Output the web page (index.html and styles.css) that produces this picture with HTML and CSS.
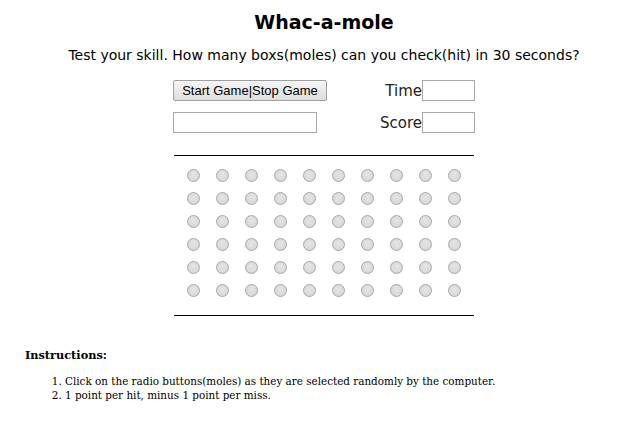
FILE: index.html
```html
<!DOCTYPE html>
<html>
<head>
<meta charset="utf-8">
<title>Whac-a-mole</title>
<link rel="stylesheet" href="styles.css">
</head>
<body>
<div class="game">
  <h1 class="title">Whac-a-mole</h1>
  <p class="lead">Test your skill. How many boxs(moles) can you check(hit) in 30 seconds?</p>
  <div class="controls">
    <button class="btn" type="button">Start Game|Stop Game</button>
    <div class="field"><span class="label">Time</span><input class="small" type="text"></div>
    <input class="wide" type="text">
    <div class="field"><span class="label">Score</span><input class="small" type="text"></div>
  </div>
  <div class="board">
    <div class="grid" id="grid"></div>
  </div>
</div>
<div class="instructions">
  <h3 class="ins-title">Instructions:</h3>
  <ol class="ins-list">
    <li>Click on the radio buttons(moles) as they are selected randomly by the computer.</li>
    <li>1 point per hit, minus 1 point per miss.</li>
  </ol>
</div>
<script>
  var g = document.getElementById('grid');
  for (var i = 0; i < 60; i++) {
    var r = document.createElement('input');
    r.type = 'radio';
    r.className = 'mole';
    r.name = 'm' + i;
    g.appendChild(r);
  }
</script>
</body>
</html>
```
FILE: styles.css
```css
body {
  margin: 8px;
  background: #fff;
  color: #000;
}
.game {
  padding-left: 28px;
  font-family: "DejaVu Sans", sans-serif;
}
.title {
  text-align: center;
  font-size: 19px;
  font-weight: bold;
  margin: 2px 0 0 0;
  line-height: 24px;
}
.lead {
  text-align: center;
  font-size: 14px;
  margin: 11px 0 0 0;
  line-height: 20px;
}
.controls {
  width: 302px;
  margin: 15px auto 0 auto;
  display: grid;
  grid-template-columns: 1fr auto;
  row-gap: 11px;
  align-items: center;
}
.btn {
  width: 154px;
  height: 21px;
  padding: 0;
  font-family: "Liberation Sans", Arial, sans-serif;
  font-size: 13px;
  border: 1px solid #a0a0a0;
  border-radius: 2px;
  background: linear-gradient(#f6f6f6, #dddddd);
  color: #000;
}
.field {
  display: flex;
  align-items: center;
  justify-content: flex-end;
}
.label {
  font-size: 15px;
  color: #222;
}
.small, .wide {
  height: 21px;
  box-sizing: border-box;
  border: 1px solid #a9a9a9;
  padding: 0 2px;
  margin: 0;
}
.small { width: 53px; }
.wide { width: 144px; }
.board {
  width: 300px;
  margin: 22px auto 0 auto;
  border-top: 1px solid #000;
  border-bottom: 1px solid #000;
  padding: 8px 5px 13px 5px;
  box-sizing: border-box;
}
.grid {
  display: grid;
  grid-template-columns: repeat(10, 29px);
  grid-auto-rows: 23px;
  justify-items: center;
  align-items: center;
}
.mole {
  -webkit-appearance: none;
  appearance: none;
  width: 13px;
  height: 13px;
  margin: 0;
  border-radius: 50%;
  border: 1px solid #a6a6a6;
  background: radial-gradient(circle at 50% 40%, #e4e4e4, #d4d4d4);
  box-sizing: border-box;
}
.instructions {
  padding-left: 17px;
  font-family: "DejaVu Serif", Georgia, serif;
}
.ins-title {
  font-size: 11.3px;
  font-weight: bold;
  margin: 32px 0 0 0;
}
.ins-list {
  font-size: 10.4px;
  margin: 12px 0 0 0;
  padding-left: 40px;
  line-height: 14px;
}
```
